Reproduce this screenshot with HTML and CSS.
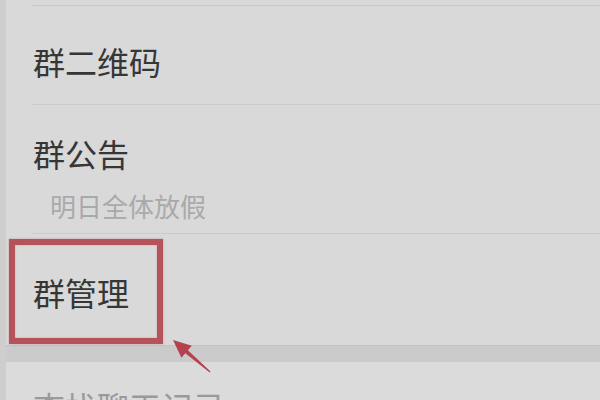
FILE: index.html
```html
<!DOCTYPE html>
<html lang="zh-CN">
<head>
<meta charset="utf-8">
<title>群设置</title>
<link rel="stylesheet" href="styles.css">
</head>
<body>
<div class="screen">
  <div class="group">
    <div class="row row-qr">
      <span class="title">群二维码</span>
    </div>
    <div class="row row-notice">
      <span class="title">群公告</span>
      <span class="sub">明日全体放假</span>
    </div>
    <div class="row row-manage">
      <span class="title">群管理</span>
      <div class="highlight"></div>
    </div>
  </div>
  <div class="band"></div>
  <div class="group group-next">
    <div class="row row-search">
      <span class="title">查找聊天记录</span>
    </div>
  </div>
  <svg class="arrow" width="50" height="45" viewBox="0 0 50 45">
    <polygon points="8,8 16.4,25.8 20.3,21.3 44.7,40.6 45.5,39.4 22.9,18.3 26.8,13.8" fill="#b4434d"/>
  </svg>
</div>
</body>
</html>
```
FILE: styles.css
```css
html, body {
  margin: 0;
  padding: 0;
}
body {
  background: #d9d9d9;
  font-family: "Noto Sans CJK SC", "Noto Sans", sans-serif;
  overflow: hidden;
}
.screen {
  position: relative;
  width: 600px;
  height: 400px;
  box-sizing: border-box;
  border-left: 6px solid #cecece;
  display: flex;
  flex-direction: column;
  overflow: hidden;
}
.group {
  display: flex;
  flex-direction: column;
  flex-shrink: 0;
  padding-top: 5px;
}
.row {
  margin-left: 26px;
  border-top: 1px solid #cacaca;
  display: flex;
  flex-direction: column;
  flex-shrink: 0;
}
.title {
  font-size: 32px;
  line-height: 32px;
  height: 32px;
  color: #363636;
  margin-left: 1px;
  white-space: nowrap;
}
.sub {
  font-size: 26px;
  line-height: 26px;
  height: 26px;
  color: #a9a9a9;
  margin-left: 18px;
  margin-top: 24px;
}
.row-qr {
  padding: 39px 0 27px;
}
.row-notice {
  padding: 32px 0 14px;
}
.row-manage {
  position: relative;
  padding: 42px 0 37px;
}
.highlight {
  position: absolute;
  left: -23px;
  top: 5px;
  width: 154px;
  height: 105px;
  box-sizing: border-box;
  border: 6px solid #b5535b;
  box-shadow: inset 0 0 2px rgba(200, 110, 115, 0.6), 0 0 2px rgba(190, 90, 100, 0.5);
}
.band {
  flex-shrink: 0;
  height: 16px;
  background: #cbcbcb;
  border-top: 1px solid #c3c3c3;
}
.group-next {
  padding-top: 0;
  background: #dbdbdb;
  flex: 1 0 auto;
}
.group-next .row {
  border-top: none;
}
.row-search {
  padding-top: 28px;
}
.row-search .title {
  color: #9a9a9a;
}
.arrow {
  position: absolute;
  left: 159px;
  top: 332px;
}
```
